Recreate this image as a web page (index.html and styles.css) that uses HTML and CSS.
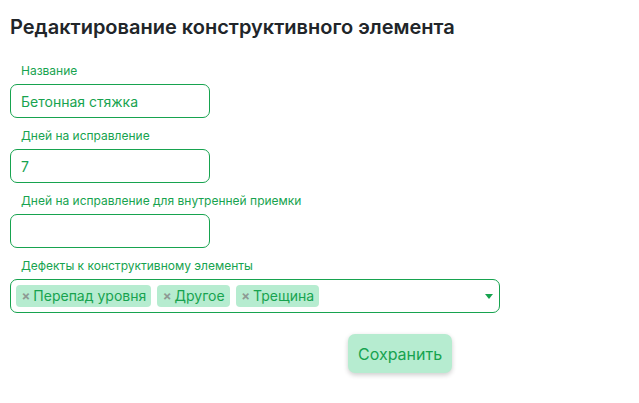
FILE: index.html
```html
<!DOCTYPE html>
<html lang="ru">
<head>
    <meta charset="UTF-8">
    <meta name="viewport" content="width=device-width, initial-scale=1.0">
    <title>Редактирование конструктивного элемента</title>
    <link rel="stylesheet" href="styles.css">
</head>
<body>
    <h1>Редактирование конструктивного элемента</h1>

    <form class="form-edit">
        <div class="field">
            <label for="name">Название</label>
            <input type="text" id="name" class="input" value="Бетонная стяжка">
        </div>

        <div class="field">
            <label for="days">Дней на исправление</label>
            <input type="text" id="days" class="input" value="7">
        </div>

        <div class="field">
            <label for="daysInner">Дней на исправление для внутренней приемки</label>
            <input type="text" id="daysInner" class="input" value="">
        </div>

        <div class="field">
            <label>Дефекты к конструктивному элементы</label>
            <div class="multiselect">
                <span class="tag"><span class="tag-remove">×</span>Перепад уровня</span>
                <span class="tag"><span class="tag-remove">×</span>Другое</span>
                <span class="tag"><span class="tag-remove">×</span>Трещина</span>
                <span class="caret"></span>
            </div>
        </div>

        <div class="actions">
            <button type="button" class="btn-save">Сохранить</button>
        </div>
    </form>
</body>
</html>
```

FILE: styles.css
```css
body {
    font-family: Inter, "Noto Sans", sans-serif;
    margin: 0;
    padding: 14px 10px;
    background: #fff;
}
h1 {
    margin: 0 0 23px 0;
    font-size: 20px;
    font-weight: 600;
    color: #212529;
    line-height: 26px;
}
.field {
    display: flex;
    flex-direction: column;
    margin-bottom: 10px;
}
.field label {
    font-size: 12px;
    color: #17a34f;
    padding-left: 11px;
    line-height: 16px;
    margin-bottom: 5px;
}
.input {
    width: 200px;
    height: 34px;
    box-sizing: border-box;
    border: 1px solid #17a34f;
    border-radius: 7px;
    padding: 0 10px;
    font-family: inherit;
    font-size: 14px;
    color: #17a34f;
    outline: none;
}
.multiselect {
    width: 490px;
    height: 34px;
    box-sizing: border-box;
    border: 1px solid #17a34f;
    border-radius: 7px;
    padding: 0 5px;
    display: flex;
    align-items: center;
    gap: 6px;
    position: relative;
}
.tag {
    background: #b6ecd0;
    color: #17a34f;
    font-size: 14px;
    height: 22px;
    line-height: 22px;
    padding: 0 5px 0 5.5px;
    border-radius: 4px;
    display: flex;
    align-items: center;
}
.tag-remove {
    color: #8e9a94;
    font-size: 13px;
    font-weight: 700;
    margin-right: 3px;
}
.caret {
    position: absolute;
    right: 6px;
    top: 14px;
    width: 0;
    height: 0;
    border-left: 4px solid transparent;
    border-right: 4px solid transparent;
    border-top: 5px solid #17a34f;
}
.actions {
    display: flex;
    padding-top: 11px;
    padding-left: 338px;
}
.btn-save {
    background: #b6ecd0;
    color: #17a34f;
    border: none;
    border-radius: 7px;
    height: 39px;
    padding: 0 10px;
    font-family: inherit;
    font-size: 16px;
    box-shadow: 0 2px 5px rgba(0, 0, 0, 0.2);
    cursor: pointer;
}
```
